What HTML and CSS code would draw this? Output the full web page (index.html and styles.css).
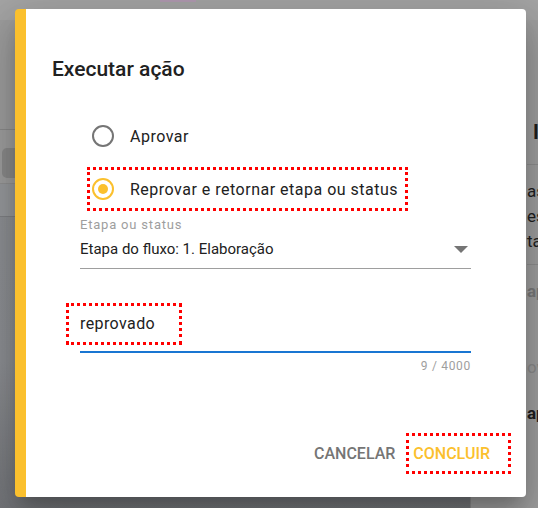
FILE: index.html
```html
<!DOCTYPE html>
<html lang="pt-BR">
<head>
<meta charset="utf-8">
<title>Executar ação</title>
<link rel="stylesheet" href="styles.css">
</head>
<body>
<div class="page">
  <div class="topbar"><span class="tab"></span></div>
  <div class="main">
    <div class="leftcol">
      <div class="lc-a"></div>
      <div class="lc-b"><span class="chip"></span></div>
      <div class="lc-c"></div>
      <div class="lc-d"></div>
    </div>
    <div class="rightcol">
      <div class="rc-head">I</div>
      <div class="rc-block">
        <div class="rc-line">as</div>
        <div class="rc-line">es</div>
        <div class="rc-line">ta</div>
      </div>
      <div class="rc-sub">ap</div>
      <div class="rc-dim">ov</div>
      <div class="rc-bold">ap</div>
    </div>
  </div>
</div>

<div class="dialog">
  <h2 class="title">Executar ação</h2>

  <div class="radios">
    <label class="radio">
      <span class="circle"></span>
      <span class="radio-text">Aprovar</span>
    </label>
    <label class="radio radio-marked">
      <span class="circle circle-on"><span class="dot"></span></span>
      <span class="radio-text">Reprovar e retornar etapa ou status</span>
    </label>
  </div>

  <div class="select-field">
    <div class="field-label">Etapa ou status</div>
    <div class="select-value">
      <span>Etapa do fluxo: 1. Elaboração</span>
      <span class="arrow"></span>
    </div>
  </div>

  <div class="text-field">
    <div class="text-input"><span class="text-marked">reprovado</span></div>
    <div class="counter">9 / 4000</div>
  </div>

  <div class="actions">
    <button class="btn btn-cancel">CANCELAR</button>
    <button class="btn btn-ok">CONCLUIR</button>
  </div>
</div>
</body>
</html>
```

FILE: styles.css
```css
* { box-sizing: border-box; }

html, body {
  margin: 0;
  padding: 0;
}

body {
  width: 538px;
  height: 508px;
  overflow: hidden;
  position: relative;
  font-family: Roboto, "Liberation Sans", sans-serif;
  background: #8e9094;
}

/* ---------- background page (dimmed) ---------- */
.page {
  display: flex;
  flex-direction: column;
  height: 508px;
}

.topbar {
  height: 20px;
  background: #a4a4a4;
  flex: none;
  display: flex;
  padding-left: 160px;
}

.tab {
  width: 36px;
  height: 2px;
  background: #b09ab0;
}

.main {
  flex: 1;
  display: grid;
  grid-template-columns: 470px 1fr;
  background: linear-gradient(#8f9195 0%, #8c8e92 70%, #74767a 100%);
}

.leftcol {
  display: flex;
  flex-direction: column;
}

.lc-a {
  height: 110px;
  background: #9d9d9d;
  border-bottom: 1px solid #8a8a8a;
}

.lc-b {
  height: 53px;
  background: #9e9e9e;
  padding: 18px 0 0 2px;
}

.chip {
  display: block;
  width: 40px;
  height: 30px;
  border-radius: 5px;
  background: #8a8a8a;
}

.lc-c {
  height: 34px;
  background: #97999c;
  border-top: 1px solid #909090;
  border-bottom: 1px solid #7f8184;
}

.lc-d {
  flex: 1;
}

.rightcol {
  background: #9f9f9f;
  border-left: 1px solid #8a8a8a;
  display: flex;
  flex-direction: column;
  padding-left: 56px;
  color: #1e1e1e;
  font-size: 17px;
  white-space: nowrap;
  overflow: hidden;
}

.rc-head {
  margin-top: 100px;
  height: 45px;
  font-weight: 700;
  font-size: 20px;
  padding-left: 6px;
  border-bottom: 1px solid #8e8e8e;
}

.rc-block {
  padding: 14px 0 10px;
  line-height: 25px;
  border-bottom: 1px solid #8e8e8e;
}

.rc-sub {
  margin-top: 16px;
  color: #7a7a7a;
  font-weight: 700;
}

.rc-dim {
  margin-top: 56px;
  color: #8a8a8a;
}

.rc-bold {
  margin-top: 26px;
  font-weight: 700;
}

/* ---------- dialog ---------- */
.dialog {
  position: absolute;
  left: 15px;
  top: 9px;
  width: 511px;
  height: 488px;
  background: #ffffff;
  border-left: 11px solid #fbc02d;
  border-radius: 4px;
  box-shadow: 0 11px 15px -7px rgba(0,0,0,0.2), 0 24px 38px 3px rgba(0,0,0,0.14), 0 9px 46px 8px rgba(0,0,0,0.12);
  padding: 44px 55px 0 26px;
  display: flex;
  flex-direction: column;
}

.title {
  margin: 0;
  font-size: 21px;
  line-height: 32px;
  font-weight: 500;
  color: #212121;
}

.radios {
  margin-top: 29px;
  margin-left: 35px;
  display: flex;
  flex-direction: column;
  gap: 9px;
  align-items: flex-start;
}

.radio {
  height: 44px;
  display: flex;
  align-items: center;
  gap: 16px;
  padding: 0 7px 0 2px;
  border: 3px solid transparent;
  font-size: 16px;
  letter-spacing: 0.5px;
  color: #212121;
}

.radio-marked {
  border: 3px dotted #ff0000;
}

.circle {
  width: 22px;
  height: 22px;
  border-radius: 50%;
  border: 2px solid #757575;
  display: flex;
  align-items: center;
  justify-content: center;
  flex: none;
}

.circle-on {
  border-color: #fbc02d;
}

.dot {
  width: 10px;
  height: 10px;
  border-radius: 50%;
  background: #fbc02d;
}

.select-field {
  margin-top: 6px;
  margin-left: 28px;
}

.field-label {
  font-size: 13px;
  line-height: 16px;
  letter-spacing: 0.8px;
  color: #9e9e9e;
}

.select-value {
  margin-top: 6px;
  font-size: 15px;
  line-height: 20px;
  color: #212121;
  padding-bottom: 9px;
  border-bottom: 1px solid #9e9e9e;
  display: flex;
  justify-content: space-between;
  align-items: center;
}

.arrow {
  width: 0;
  height: 0;
  border-left: 7px solid transparent;
  border-right: 7px solid transparent;
  border-top: 7px solid #757575;
  margin-right: 3px;
}

.text-field {
  margin-top: 34px;
  margin-left: 28px;
}

.text-input {
  border-bottom: 2px solid #1976d2;
  padding-bottom: 6px;
}

.text-marked {
  display: inline-block;
  margin-left: -14px;
  padding: 8px 24px 8px 11px;
  border: 3px dotted #ff0000;
  font-size: 16px;
  line-height: 20px;
  letter-spacing: 0.4px;
  color: #212121;
}

.counter {
  margin-top: 6px;
  text-align: right;
  font-size: 12px;
  line-height: 14px;
  letter-spacing: 0.7px;
  color: #9e9e9e;
}

.actions {
  margin-top: 60px;
  margin-right: -40px;
  display: flex;
  justify-content: flex-end;
  align-items: center;
  gap: 8px;
}

.btn {
  font-family: Roboto, "Liberation Sans", sans-serif;
  font-size: 16px;
  font-weight: 500;
  background: none;
  border: 3px solid transparent;
  height: 41px;
  padding: 0 18px 0 4px;
  cursor: pointer;
}

.btn-cancel {
  color: #757575;
  padding: 0;
}

.btn-ok {
  color: #fbc02d;
  border: 3px dotted #ff0000;
}
```
